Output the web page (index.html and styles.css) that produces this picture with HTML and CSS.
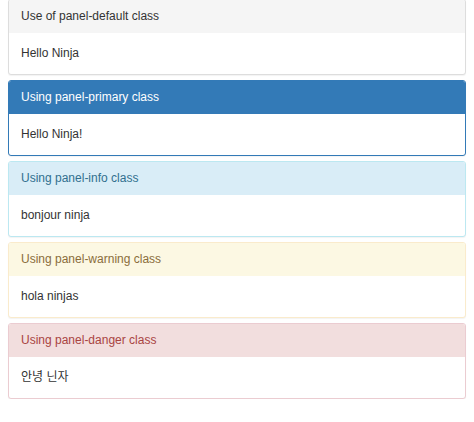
FILE: index.html
```html
<!DOCTYPE html>
<html>
<head>
<meta charset="utf-8">
<link rel="stylesheet" href="styles.css">
</head>
<body>
<div class="panels">
  <div class="panel panel-default">
    <div class="panel-heading">Use of panel-default class</div>
    <div class="panel-body">Hello Ninja</div>
  </div>
  <div class="panel panel-primary">
    <div class="panel-heading">Using panel-primary class</div>
    <div class="panel-body">Hello Ninja!</div>
  </div>
  <div class="panel panel-info">
    <div class="panel-heading">Using panel-info class</div>
    <div class="panel-body">bonjour ninja</div>
  </div>
  <div class="panel panel-warning">
    <div class="panel-heading">Using panel-warning class</div>
    <div class="panel-body">hola ninjas</div>
  </div>
  <div class="panel panel-danger">
    <div class="panel-heading">Using panel-danger class</div>
    <div class="panel-body">안녕 닌자</div>
  </div>
</div>
</body>
</html>
```
FILE: styles.css
```css
html, body {
  margin: 0;
  padding: 0;
  background: #fff;
}
body {
  font-family: "Liberation Sans", Arial, "Noto Sans CJK KR", sans-serif;
  font-size: 12px;
  line-height: 17px;
  color: #333;
}
.panels {
  margin: -1px 8px 0 8px;
  display: flex;
  flex-direction: column;
  gap: 5px;
}
.panel {
  border: 1px solid #ddd;
  border-radius: 3px;
  background: #fff;
  box-shadow: 0 1px 1px rgba(0,0,0,0.05);
}
.panel-heading {
  padding: 8px 12px;
  border-radius: 2px 2px 0 0;
}
.panel-body {
  padding: 12px 12px;
}
.panel-default { border-color: #ddd; }
.panel-default .panel-heading { background: #f5f5f5; color: #333; }
.panel-primary { border-color: #337ab7; }
.panel-primary .panel-heading { background: #337ab7; color: #fff; }
.panel-info { border-color: #bce8f1; }
.panel-info .panel-heading { background: #d9edf7; color: #31708f; }
.panel-warning { border-color: #faebcc; }
.panel-warning .panel-heading { background: #fcf8e3; color: #8a6d3b; }
.panel-danger { border-color: #ebccd1; }
.panel-danger .panel-heading { background: #f2dede; color: #a94442; }
```
